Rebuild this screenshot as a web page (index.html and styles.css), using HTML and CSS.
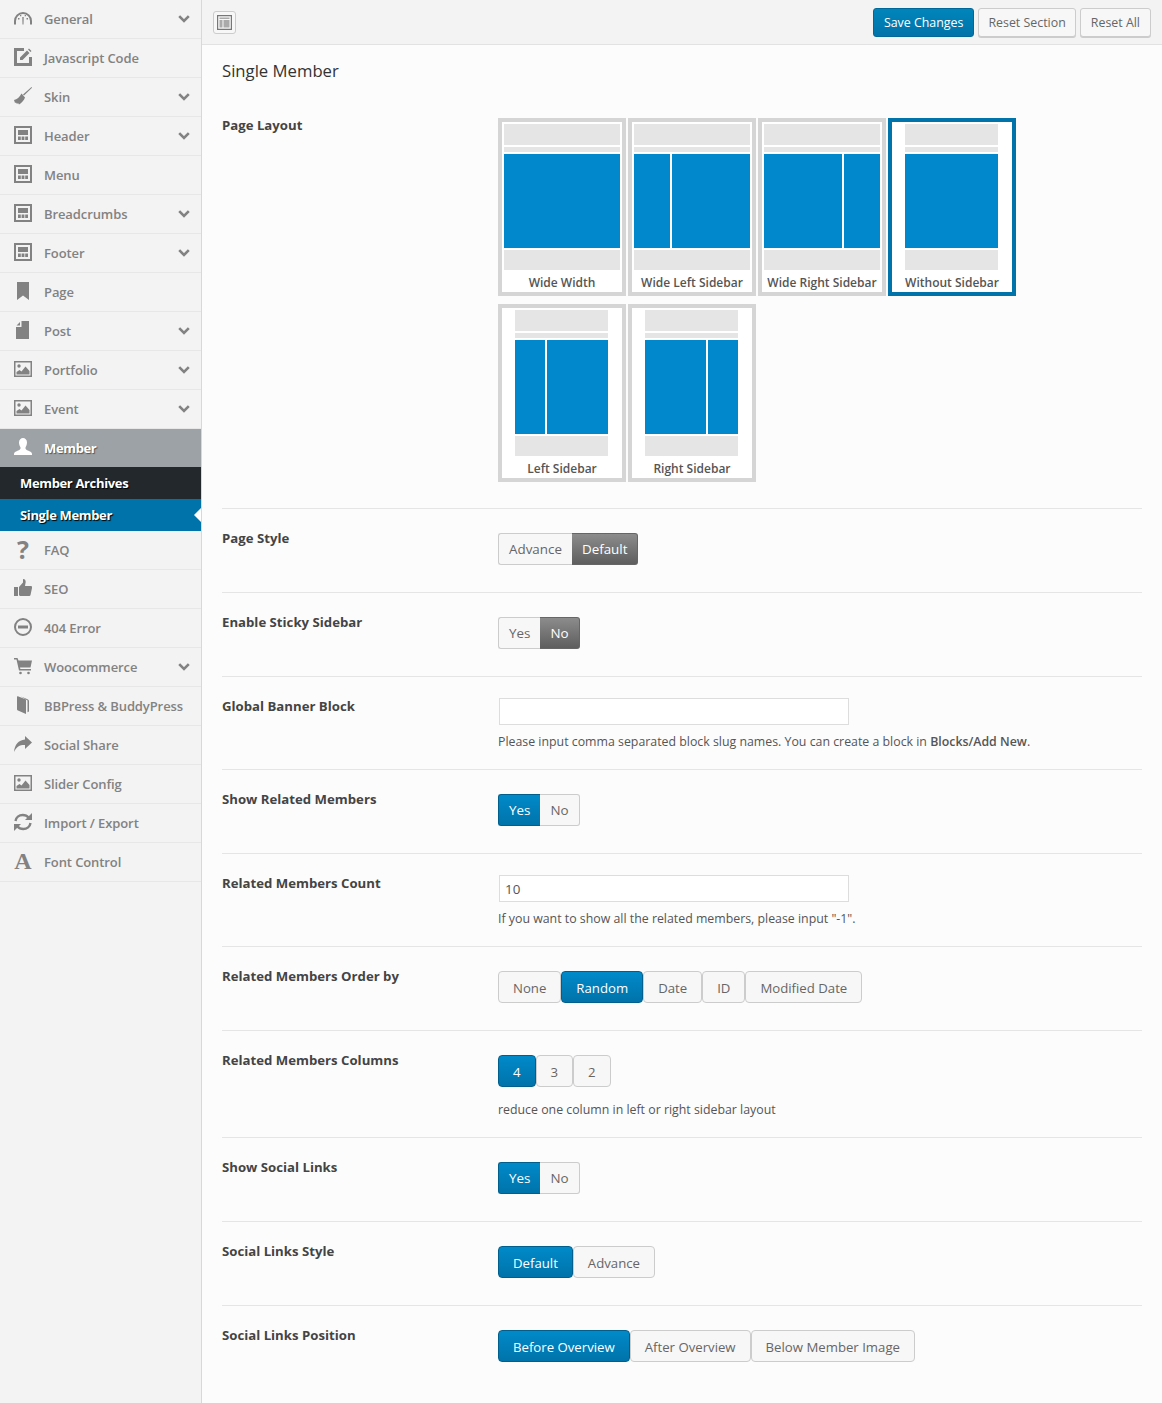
FILE: index.html
```html
<!DOCTYPE html>
<html lang="en">
<head>
    <meta charset="UTF-8">
    <title>Theme Options - Single Member</title>
    <link rel="stylesheet" href="styles.css">
</head>
<body>
    <svg class="sprite" xmlns="http://www.w3.org/2000/svg">
        <symbol id="i-gauge" viewBox="0 0 18 18">
            <path d="M1 15.500V12a8 8 0 0 1 16 0v3.500" fill="none" stroke="currentColor" stroke-width="2"/>
            <path d="M8.300 8h1.400l-.2 7.500h-1zM4 9h1.500v1.500H4zM12.500 9H14v1.500h-1.500zM6 6h1.300v1.300H6zM10.700 6H12v1.300h-1.300z" fill="currentColor"/>
        </symbol>
        <symbol id="i-edit" viewBox="0 0 18 18">
            <path d="M10 1.500H1.500v15h15V9" fill="none" stroke="currentColor" stroke-width="3"/>
            <path d="M6 9.500 13 2.500l2.500 2.500-7 7H6zM14 1.500l1-1 2.500 2.500-1 1z" fill="currentColor"/>
        </symbol>
        <symbol id="i-broom" viewBox="0 0 18 18">
            <path d="M17.500 0 18 .7 10 8.500 9 7.500z" fill="currentColor"/>
            <path d="M7.500 6.500 11 10.500c-1 3-3.500 5.500-6 7l-1-1.500-1 1-1-1.500-1 .5L0 13c3-.5 5.500-3 7.500-6.500z" fill="currentColor"/>
        </symbol>
        <symbol id="i-layout" viewBox="0 0 18 18">
            <path d="M0 0h18v18H0zM2 2v14h14V2z" fill-rule="evenodd" fill="currentColor"/>
            <path d="M4 4h10v5H4zM4 10.500h2.800V14H4zM7.600 10.500h2.800V14H7.600zM11.200 10.500H14V14h-2.800z" fill="currentColor"/>
        </symbol>
        <symbol id="i-bookmark" viewBox="0 0 18 18">
            <path d="M3 0h12v18l-6-4.500L3 18z" fill="currentColor"/>
        </symbol>
        <symbol id="i-post" viewBox="0 0 18 18">
            <path d="M7.500 0H15v18H2V6h5.500zM2.500 4.500 6 1v3.500z" fill="currentColor"/>
        </symbol>
        <symbol id="i-image" viewBox="0 0 18 18">
            <path d="M0 1h18v16H0zM1.500 2.500v13h15v-13z" fill-rule="evenodd" fill="currentColor"/>
            <circle cx="5" cy="6" r="1.700" fill="currentColor"/>
            <path d="M2.500 14.500v-2.500l3 -2 2 1.500 4-5 4 4.500v3.500z" fill="currentColor"/>
        </symbol>
        <symbol id="i-user" viewBox="0 0 18 18">
            <path d="M5 4.500C5 1.500 7 0 9 0s4 1.500 4 4.500c0 2.300-1 4-1.500 5-.5 1.500 1 2.500 3 3.300 2 .8 3.500 1.700 3.500 3.200v1H0v-1c0-1.500 1.500-2.400 3.500-3.200 2-.8 3.500-1.800 3-3.300C6 8.500 5 6.800 5 4.500z" fill="currentColor"/>
        </symbol>
        <symbol id="i-thumb" viewBox="0 0 18 18">
            <path d="M0 8h4v9H0zM5 8l4-4.500V0c2.500 0 3 2 2.500 4L11 7h6c1 0 1.200 1 1 2l-1.500 7c-.2.800-.8 1-1.500 1H7c-1 0-2-.5-2-1z" fill="currentColor"/>
        </symbol>
        <symbol id="i-minus" viewBox="0 0 18 18">
            <circle cx="9" cy="9" r="8" fill="none" stroke="currentColor" stroke-width="2"/>
            <path d="M4 7.500h10v3H4z" fill="currentColor"/>
        </symbol>
        <symbol id="i-cart" viewBox="0 0 18 18">
            <path d="M0 1h3.500l1 2.500H18l-1.500 7H6l.4 1.500H17v1.500H5L2.500 2.500H0z" fill="currentColor"/>
            <circle cx="6.500" cy="16" r="1.300" fill="currentColor"/>
            <circle cx="14.500" cy="16" r="1.300" fill="currentColor"/>
        </symbol>
        <symbol id="i-book" viewBox="0 0 18 18">
            <path d="M3 1c0-1 .5-1 1.500-.5l7.500 3v14.500L4 14.500c-.7-.3-1-.7-1-1.500z" fill="currentColor"/>
            <path d="M7 .5 13 3c1.500.6 2 1.200 2 2v10.500l-1.500.8V4.500z" fill="currentColor"/>
        </symbol>
        <symbol id="i-share" viewBox="0 0 18 18">
            <path d="M11 1l7 6.500-7 6.500V10C6 9.800 2.500 11.500 0 17c.5-7 4.500-12 11-12.500z" fill="currentColor"/>
        </symbol>
        <symbol id="i-refresh" viewBox="0 0 18 18">
            <path d="M1.500 8C2 4.500 5 2 8.800 2c2.500 0 4.500 1 5.700 2.500" fill="none" stroke="currentColor" stroke-width="2.400"/>
            <path d="M18 0v7h-7z" fill="currentColor"/>
            <path d="M16.500 10c-.5 3.500-3.500 6-7.300 6-2.500 0-4.500-1-5.700-2.500" fill="none" stroke="currentColor" stroke-width="2.400"/>
            <path d="M0 18v-7h7z" fill="currentColor"/>
        </symbol>
        <symbol id="i-chevron" viewBox="0 0 12 8">
            <path d="M1.200 1.200 6 6l4.800-4.800" fill="none" stroke="currentColor" stroke-width="2.600"/>
        </symbol>
    </svg>

    <div class="page">
        <nav class="sidebar">
            <a class="menu-item"><svg class="icon"><use href="#i-gauge"/></svg><span class="menu-text">General</span><svg class="chevron"><use href="#i-chevron"/></svg></a>
            <a class="menu-item"><svg class="icon"><use href="#i-edit"/></svg><span class="menu-text">Javascript Code</span></a>
            <a class="menu-item"><svg class="icon"><use href="#i-broom"/></svg><span class="menu-text">Skin</span><svg class="chevron"><use href="#i-chevron"/></svg></a>
            <a class="menu-item"><svg class="icon"><use href="#i-layout"/></svg><span class="menu-text">Header</span><svg class="chevron"><use href="#i-chevron"/></svg></a>
            <a class="menu-item"><svg class="icon"><use href="#i-layout"/></svg><span class="menu-text">Menu</span></a>
            <a class="menu-item"><svg class="icon"><use href="#i-layout"/></svg><span class="menu-text">Breadcrumbs</span><svg class="chevron"><use href="#i-chevron"/></svg></a>
            <a class="menu-item"><svg class="icon"><use href="#i-layout"/></svg><span class="menu-text">Footer</span><svg class="chevron"><use href="#i-chevron"/></svg></a>
            <a class="menu-item"><svg class="icon"><use href="#i-bookmark"/></svg><span class="menu-text">Page</span></a>
            <a class="menu-item"><svg class="icon"><use href="#i-post"/></svg><span class="menu-text">Post</span><svg class="chevron"><use href="#i-chevron"/></svg></a>
            <a class="menu-item"><svg class="icon"><use href="#i-image"/></svg><span class="menu-text">Portfolio</span><svg class="chevron"><use href="#i-chevron"/></svg></a>
            <a class="menu-item"><svg class="icon"><use href="#i-image"/></svg><span class="menu-text">Event</span><svg class="chevron"><use href="#i-chevron"/></svg></a>
            <a class="menu-item menu-open"><svg class="icon"><use href="#i-user"/></svg><span class="menu-text">Member</span></a>
            <a class="submenu-item">Member Archives</a>
            <a class="submenu-item submenu-active">Single Member</a>
            <a class="menu-item"><span class="icon icon-glyph">?</span><span class="menu-text">FAQ</span></a>
            <a class="menu-item"><svg class="icon"><use href="#i-thumb"/></svg><span class="menu-text">SEO</span></a>
            <a class="menu-item"><svg class="icon"><use href="#i-minus"/></svg><span class="menu-text">404 Error</span></a>
            <a class="menu-item"><svg class="icon"><use href="#i-cart"/></svg><span class="menu-text">Woocommerce</span><svg class="chevron"><use href="#i-chevron"/></svg></a>
            <a class="menu-item"><svg class="icon"><use href="#i-book"/></svg><span class="menu-text">BBPress &amp; BuddyPress</span></a>
            <a class="menu-item"><svg class="icon"><use href="#i-share"/></svg><span class="menu-text">Social Share</span></a>
            <a class="menu-item"><svg class="icon"><use href="#i-image"/></svg><span class="menu-text">Slider Config</span></a>
            <a class="menu-item"><svg class="icon"><use href="#i-refresh"/></svg><span class="menu-text">Import / Export</span></a>
            <a class="menu-item"><span class="icon icon-glyph icon-serif">A</span><span class="menu-text">Font Control</span></a>
        </nav>

        <div class="main">
            <header class="topbar">
                <button class="expand-btn">
                    <svg width="15" height="15" viewBox="0 0 15 15"><path d="M0 0h15v15H0zM1.200 1.200v12.600h12.600V1.200z" fill-rule="evenodd" fill="#777"/><path d="M2.500 2.500h10v1.500h-10zM2.500 5h3v7.500h-3zM6.500 5h6v7.500h-6z" fill="#aaa"/></svg>
                </button>
                <div class="topbar-actions">
                    <button class="action-btn action-primary">Save Changes</button>
                    <button class="action-btn action-section">Reset Section</button>
                    <button class="action-btn">Reset All</button>
                </div>
            </header>

            <div class="content">
                <h2 class="section-title">Single Member</h2>

                <div class="row row-layout">
                    <div class="row-label">Page Layout</div>
                    <div class="layout-grid">
                        <div class="tile">
                            <div class="thumb"><div class="bar-top"></div><div class="bar-thin"></div><div class="thumb-body"><div class="col-fill"></div></div><div class="bar-bottom"></div></div>
                            <div class="tile-name">Wide Width</div>
                        </div>
                        <div class="tile">
                            <div class="thumb"><div class="bar-top"></div><div class="bar-thin"></div><div class="thumb-body"><div class="col-wide-side"></div><div class="col-fill"></div></div><div class="bar-bottom"></div></div>
                            <div class="tile-name">Wide Left Sidebar</div>
                        </div>
                        <div class="tile">
                            <div class="thumb"><div class="bar-top"></div><div class="bar-thin"></div><div class="thumb-body"><div class="col-fill"></div><div class="col-wide-side"></div></div><div class="bar-bottom"></div></div>
                            <div class="tile-name">Wide Right Sidebar</div>
                        </div>
                        <div class="tile tile-selected">
                            <div class="thumb thumb-narrow"><div class="bar-top"></div><div class="bar-thin"></div><div class="thumb-body"><div class="col-fill"></div></div><div class="bar-bottom"></div></div>
                            <div class="tile-name">Without Sidebar</div>
                        </div>
                        <div class="tile">
                            <div class="thumb thumb-narrow"><div class="bar-top"></div><div class="bar-thin"></div><div class="thumb-body"><div class="col-side"></div><div class="col-fill"></div></div><div class="bar-bottom"></div></div>
                            <div class="tile-name">Left Sidebar</div>
                        </div>
                        <div class="tile">
                            <div class="thumb thumb-narrow"><div class="bar-top"></div><div class="bar-thin"></div><div class="thumb-body"><div class="col-fill"></div><div class="col-side"></div></div><div class="bar-bottom"></div></div>
                            <div class="tile-name">Right Sidebar</div>
                        </div>
                    </div>
                </div>

                <div class="row">
                    <div class="row-label">Page Style</div>
                    <div class="row-control">
                        <div class="switch"><span class="switch-btn">Advance</span><span class="switch-btn switch-grey">Default</span></div>
                    </div>
                </div>

                <div class="row">
                    <div class="row-label">Enable Sticky Sidebar</div>
                    <div class="row-control">
                        <div class="switch"><span class="switch-btn">Yes</span><span class="switch-btn switch-grey">No</span></div>
                    </div>
                </div>

                <div class="row row-help">
                    <div class="row-label">Global Banner Block</div>
                    <div class="row-control row-control-input">
                        <input class="text-input" type="text" value="">
                        <p class="help-text">Please input comma separated block slug names. You can create a block in <strong>Blocks/Add New</strong>.</p>
                    </div>
                </div>

                <div class="row">
                    <div class="row-label">Show Related Members</div>
                    <div class="row-control">
                        <div class="switch"><span class="switch-btn switch-blue">Yes</span><span class="switch-btn">No</span></div>
                    </div>
                </div>

                <div class="row row-help">
                    <div class="row-label">Related Members Count</div>
                    <div class="row-control row-control-input">
                        <input class="text-input" type="text" value="10">
                        <p class="help-text">If you want to show all the related members, please input "-1".</p>
                    </div>
                </div>

                <div class="row">
                    <div class="row-label">Related Members Order by</div>
                    <div class="row-control">
                        <div class="options">
                            <span class="option">None</span>
                            <span class="option option-on">Random</span>
                            <span class="option">Date</span>
                            <span class="option">ID</span>
                            <span class="option">Modified Date</span>
                        </div>
                    </div>
                </div>

                <div class="row row-help">
                    <div class="row-label">Related Members Columns</div>
                    <div class="row-control">
                        <div class="options">
                            <span class="option option-on">4</span>
                            <span class="option">3</span>
                            <span class="option">2</span>
                        </div>
                        <p class="help-text help-spaced">reduce one column in left or right sidebar layout</p>
                    </div>
                </div>

                <div class="row">
                    <div class="row-label">Show Social Links</div>
                    <div class="row-control">
                        <div class="switch"><span class="switch-btn switch-blue">Yes</span><span class="switch-btn">No</span></div>
                    </div>
                </div>

                <div class="row">
                    <div class="row-label">Social Links Style</div>
                    <div class="row-control">
                        <div class="options">
                            <span class="option option-on">Default</span>
                            <span class="option">Advance</span>
                        </div>
                    </div>
                </div>

                <div class="row row-last">
                    <div class="row-label">Social Links Position</div>
                    <div class="row-control">
                        <div class="options">
                            <span class="option option-on">Before Overview</span>
                            <span class="option">After Overview</span>
                            <span class="option">Below Member Image</span>
                        </div>
                    </div>
                </div>
            </div>
        </div>
    </div>
</body>
</html>
```

FILE: styles.css
```css
* {
    box-sizing: border-box;
}
body {
    font-family: "Open Sans", sans-serif;
    font-size: 13px;
    color: #555;
    background-color: #fcfcfc;
    margin: 0;
    padding: 0;
}
.sprite {
    display: none;
}
.page {
    display: flex;
    min-height: 1403px;
}

/* sidebar */
.sidebar {
    width: 202px;
    flex-shrink: 0;
    background-color: #f3f3f3;
    border-right: 1px solid #d8d8d8;
}
.menu-item {
    display: flex;
    align-items: center;
    height: 39px;
    padding: 0 11px 1px 14px;
    border-bottom: 1px solid #e7e7e7;
    color: #828282;
}
.icon {
    width: 18px;
    height: 18px;
    flex-shrink: 0;
    margin-top: -2px;
}
.icon-glyph {
    font-size: 25px;
    font-weight: 700;
    line-height: 18px;
    text-align: center;
}
.icon-serif {
    font-family: "Liberation Serif", serif;
    font-size: 24px;
}
.menu-text {
    flex: 1;
    margin-left: 12px;
    font-weight: 600;
    font-size: 13px;
    letter-spacing: -0.1px;
    white-space: nowrap;
}
.chevron {
    width: 12px;
    height: 8px;
}
.menu-open {
    height: 38px;
    background-color: #9da2a6;
    color: #fff;
    border-bottom: none;
}
.menu-open .menu-text {
    font-weight: 700;
    letter-spacing: -0.35px;
    text-shadow: 1px 1px 1px #555;
}
.submenu-item {
    position: relative;
    display: block;
    height: 32px;
    line-height: 32px;
    padding-left: 20px;
    background-color: #23282d;
    color: #fff;
    font-weight: 700;
    letter-spacing: -0.35px;
    text-shadow: 1px 1px 1px #000;
}
.submenu-active {
    background-color: #0073aa;
}
.submenu-active::after {
    content: "";
    position: absolute;
    right: 0;
    top: 9px;
    border: 7px solid transparent;
    border-left: none;
    border-right-color: #fff;
}

/* top bar */
.main {
    flex: 1;
    min-width: 0;
}
.topbar {
    display: flex;
    justify-content: space-between;
    align-items: center;
    height: 45px;
    padding: 1px 11px 0 11px;
    background-color: #f3f3f3;
    border-bottom: 1px solid #e2e2e2;
}
.expand-btn {
    display: flex;
    align-items: center;
    justify-content: center;
    width: 23px;
    height: 23px;
    margin-top: -1px;
    padding: 0;
    background-color: #f7f7f7;
    border: 1px solid #ccc;
    border-radius: 3px;
}
.topbar-actions {
    display: flex;
    gap: 4px;
}
.action-btn {
    height: 29px;
    padding: 0 10px;
    font-family: "Open Sans", sans-serif;
    font-size: 12.4px;
    color: #666;
    background-color: #f7f7f7;
    border: 1px solid #ccc;
    border-radius: 3px;
    box-shadow: 0 1px 0 #ccc;
}
.action-section {
    padding: 0 9px;
}
.action-primary {
    color: #fff;
    background: linear-gradient(#0085ba, #0073aa);
    border-color: #006799;
    box-shadow: none;
}

/* settings rows */
.content {
    padding: 14px 20px 0;
}
.section-title {
    margin: 0 0 13px;
    font-size: 16.7px;
    font-weight: 400;
    line-height: 24px;
    color: #333;
}
.row {
    display: flex;
    padding: 21px 0 27px;
    border-bottom: 1px solid #e5e5e5;
}
.row-layout {
    padding-bottom: 26px;
}
.row-help {
    padding-bottom: 17px;
}
.row-last {
    border-bottom: none;
}
.row-label {
    width: 276px;
    flex-shrink: 0;
    line-height: 16px;
    font-size: 13.2px;
    font-weight: 700;
    color: #444;
}
.row-control {
    margin-top: 3px;
}
.row-control-input {
    margin-top: 0;
}

/* layout picker */
.layout-grid {
    display: grid;
    grid-template-columns: repeat(4, 128px);
    gap: 8px 2px;
    margin-top: 1px;
}
.tile {
    display: flex;
    flex-direction: column;
    align-items: center;
    height: 178px;
    padding-top: 2px;
    background-color: #fff;
    border: 4px solid #d5d5d5;
}
.tile-selected {
    border-color: #0073aa;
}
.thumb {
    display: flex;
    flex-direction: column;
    width: 116px;
    height: 146px;
}
.thumb-narrow {
    width: 93px;
    margin-right: 1px;
}
.bar-top {
    height: 21px;
    background-color: #e5e5e5;
}
.bar-thin {
    height: 5px;
    margin-top: 2px;
    background-color: #e5e5e5;
}
.thumb-body {
    display: flex;
    gap: 2px;
    height: 94px;
    margin-top: 2px;
}
.col-fill {
    flex: 1;
    background-color: #0087cc;
}
.col-wide-side {
    width: 36px;
    background-color: #0087cc;
}
.col-side {
    width: 30px;
    background-color: #0087cc;
}
.bar-bottom {
    height: 20px;
    margin-top: 2px;
    background-color: #e5e5e5;
}
.tile-name {
    margin-top: 5px;
    font-size: 12px;
    font-weight: 600;
    line-height: 16px;
    white-space: nowrap;
    color: #555;
}

/* switches and option buttons */
.switch {
    display: inline-flex;
}
.switch-btn {
    height: 32px;
    padding: 0 10px;
    line-height: 30px;
    font-size: 13.4px;
    color: #666;
    background-color: #f7f7f7;
    border: 1px solid #ccc;
}
.switch-btn:first-child {
    border-right: none;
    border-radius: 3px 0 0 3px;
}
.switch-btn:last-child {
    border-left: none;
    border-radius: 0 3px 3px 0;
}
.switch-grey {
    color: #fff;
    background: linear-gradient(#8c8c8c, #5e5e5e);
    border-color: #666;
}
.switch-blue {
    color: #fff;
    background: linear-gradient(#008ac9, #0073aa);
    border-color: #005f8c;
}
.options {
    display: flex;
}
.option {
    height: 32px;
    padding: 0 14px;
    line-height: 32px;
    font-size: 13.2px;
    color: #666;
    background-color: #f7f7f7;
    border: 1px solid #ccc;
    border-radius: 4px;
}
.option-on {
    color: #fff;
    background: linear-gradient(#008ac9, #0073aa);
    border-color: #005f8c;
}
.text-input {
    display: block;
    width: 350px;
    height: 27px;
    margin: 0 0 0 1px;
    padding: 0 5px;
    font-family: "Open Sans", sans-serif;
    font-size: 13.4px;
    color: #555;
    background-color: #fff;
    border: 1px solid #ddd;
}
.help-text {
    margin: 7px 0 0;
    line-height: 20px;
    font-size: 12.35px;
    color: #555;
}
.help-text strong {
    font-weight: 600;
}
.help-spaced {
    margin-top: 13px;
}
```
